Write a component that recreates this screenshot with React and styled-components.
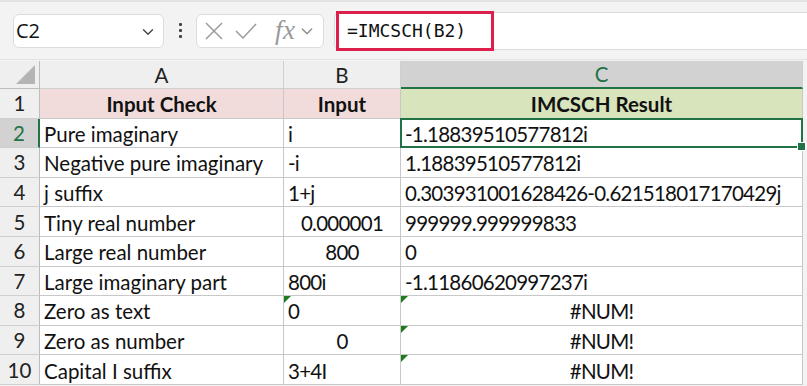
import React from 'react';
import styled, { createGlobalStyle, css } from 'styled-components';

const GlobalStyle = createGlobalStyle`
  html, body {
    margin: 0;
    padding: 0;
    background: #f3f3f3;
  }
  body {
    font-family: Lato, "Liberation Sans", sans-serif;
  }
`

const rows = [
  { a: 'Pure imaginary', b: 'i', c: '-1.18839510577812i' },
  { a: 'Negative pure imaginary', b: '-i', c: '1.18839510577812i' },
  { a: 'j suffix', b: '1+j', c: '0.303931001628426-0.621518017170429j' },
  { a: 'Tiny real number', b: '0.000001', bAlign: 'center', c: '999999.999999833' },
  { a: 'Large real number', b: '800', bAlign: 'center', c: '0' },
  { a: 'Large imaginary part', b: '800i', c: '-1.11860620997237i' },
  { a: 'Zero as text', b: '0', bFlag: true, c: '#NUM!', cAlign: 'center', cFlag: true },
  { a: 'Zero as number', b: '0', bAlign: 'center', c: '#NUM!', cAlign: 'center', cFlag: true },
  { a: 'Capital I suffix', b: '3+4I', c: '#NUM!', cAlign: 'center', cFlag: true },
]

function App() {
  return (
    <Page>
      <GlobalStyle />
      <Toolbar>
        <NameBox>
          <span>C2</span>
          <Chevron width="18" height="18" viewBox="0 0 24 24">
            <path d="M6 9l6 6 6-6" fill="none" stroke="#444" strokeWidth="1.8" strokeLinecap="round" strokeLinejoin="round" />
          </Chevron>
        </NameBox>
        <Dots>
          <i /><i /><i />
        </Dots>
        <FxBox>
          <svg width="22" height="22" viewBox="0 0 22 22">
            <path d="M3 3l16 16M19 3L3 19" stroke="#9a9a9a" strokeWidth="1.5" fill="none" />
          </svg>
          <svg width="24" height="22" viewBox="0 0 24 22">
            <path d="M2 11l7 7L22 4" stroke="#9a9a9a" strokeWidth="1.5" fill="none" />
          </svg>
          <FxLabel>fx</FxLabel>
          <svg width="16" height="16" viewBox="0 0 24 24">
            <path d="M5 9l7 7 7-7" fill="none" stroke="#8a8a8a" strokeWidth="2" strokeLinecap="round" strokeLinejoin="round" />
          </svg>
        </FxBox>
        <FormulaBar>
          <Formula>=IMCSCH(B2)</Formula>
        </FormulaBar>
      </Toolbar>

      <Sheet>
        <Corner><CornerMark /></Corner>
        <ColHead>A</ColHead>
        <ColHead>B</ColHead>
        <ColHead $active>C</ColHead>
        <Filler />

        <RowHead>1</RowHead>
        <Cell $bg="#f2dcdb" $bold $align="center">Input Check</Cell>
        <Cell $bg="#f2dcdb" $bold $align="center">Input</Cell>
        <Cell $bg="#d8e4bc" $bold $align="center">IMCSCH Result</Cell>
        <Filler />

        {rows.map((r, i) => (
          <React.Fragment key={i}>
            <RowHead $active={i === 0}>{i + 2}</RowHead>
            <Cell>{r.a}</Cell>
            <Cell $align={r.bAlign} $flag={r.bFlag} $num>{r.b}</Cell>
            <Cell $align={r.cAlign} $flag={r.cFlag} $selected={i === 0} $num>{r.c}</Cell>
            <Filler />
          </React.Fragment>
        ))}
      </Sheet>
    </Page>
  );
}

export default App;

const Page = styled.div`
  width: 807px;
  height: 386px;
  overflow: hidden;
  background: #f3f3f3;
  border-top: 2px solid #e2e2e2;
  box-sizing: border-box;
`

const Toolbar = styled.div`
  display: flex;
  align-items: center;
  height: 58px;
  padding: 0 0 0 13px;
  border-bottom: 1px solid #e3e3e3;
  box-sizing: border-box;
`

const NameBox = styled.div`
  width: 151px;
  height: 34px;
  box-sizing: border-box;
  background: #fff;
  border: 1px solid #dcdcdc;
  border-radius: 6px;
  display: flex;
  align-items: center;
  justify-content: space-between;
  padding: 0 6px 0 2px;
  font-family: "Open Sans", "Noto Sans", sans-serif;
  font-size: 20px;
  color: #111;
`

const Chevron = styled.svg`
  margin-top: 2px;
`

const Dots = styled.div`
  width: 32px;
  display: flex;
  flex-direction: column;
  align-items: center;
  gap: 3px;

  i {
    width: 3px;
    height: 3px;
    background: #444;
    border-radius: 1px;
  }
`

const FxBox = styled.div`
  width: 128px;
  height: 34px;
  box-sizing: border-box;
  background: #fff;
  border: 1px solid #dcdcdc;
  border-radius: 6px;
  display: flex;
  align-items: center;
  gap: 9px;
  padding: 0 4px 0 6px;
`

const FxLabel = styled.span`
  font-family: "Liberation Serif", "DejaVu Serif", serif;
  font-style: italic;
  font-size: 27px;
  color: #9a9a9a;
  margin-left: 8px;
  margin-right: -6px;
  line-height: 1;
  letter-spacing: 0.5px;
`

const FormulaBar = styled.div`
  flex: 1;
  height: 36px;
  margin-left: 10px;
  background: #fff;
  border: 1px solid #dcdcdc;
  border-right: none;
  border-radius: 6px 0 0 6px;
  display: flex;
  align-items: center;
  position: relative;
`

const Formula = styled.div`
  height: 40px;
  width: 158px;
  margin-left: 1px;
  box-sizing: border-box;
  border: 3px solid #dc1f4b;
  display: flex;
  align-items: center;
  padding-left: 8px;
  font-family: "DejaVu Sans Mono", "Liberation Mono", monospace;
  font-size: 18px;
  letter-spacing: 0;
  color: #111;
`

const Sheet = styled.div`
  display: grid;
  grid-template-columns: 40px 244px 117px 402px 4px;
  grid-template-rows: 28px repeat(10, 29.6px);
  background: #fff;
  margin-top: 1px;
`

const headBase = css`
  background: #efefef;
  border-right: 1px solid #cfcfcf;
  border-bottom: 1px solid #cfcfcf;
  box-sizing: border-box;
  display: flex;
  align-items: center;
  justify-content: center;
  font-family: Lato, "Liberation Sans", sans-serif;
  font-size: 20.5px;
  color: #222;
`

const Corner = styled.div`
  ${headBase};
  border-right: 1px solid #bdbdbd;
  border-bottom: 1px solid #bdbdbd;
  position: relative;
`

const CornerMark = styled.div`
  position: absolute;
  right: 4px;
  bottom: 4px;
  width: 0;
  height: 0;
  border-left: 19px solid transparent;
  border-bottom: 19px solid #b4b4b4;
`

const ColHead = styled.div`
  ${headBase};
  ${p => p.$active && css`
    background: #d2d2d2;
    color: #217346;
    border-bottom: 2px solid #217346;
  `}
`

const RowHead = styled.div`
  ${headBase};
  border-right: 1px solid #bdbdbd;
  ${p => p.$active && css`
    background: #d2d2d2;
    color: #217346;
    border-right: 2px solid #217346;
  `}
`

const Filler = styled.div`
  background: #f3f3f3;
`

const Cell = styled.div`
  position: relative;
  box-sizing: border-box;
  border-right: 1px solid #c8c8c8;
  border-bottom: 1px solid #c8c8c8;
  background: ${p => p.$bg || '#fff'};
  display: flex;
  align-items: center;
  justify-content: ${p => p.$align === 'center' ? 'center' : 'flex-start'};
  padding: 2px 4px 0;
  font-family: Lato, "Liberation Sans", sans-serif;
  font-size: 20.5px;
  letter-spacing: ${p => p.$num ? '-0.75px' : '0'};
  font-weight: ${p => p.$bold ? 700 : 400};
  color: #111;
  white-space: nowrap;

  ${p => p.$flag && css`
    &::before {
      content: "";
      position: absolute;
      left: 0;
      top: 0;
      border-top: 7px solid #1e7b1e;
      border-right: 7px solid transparent;
    }
  `}

  ${p => p.$selected && css`
    &::after {
      content: "";
      position: absolute;
      left: -1px;
      top: -1px;
      right: -1px;
      bottom: -1px;
      border: 2px solid #217346;
      pointer-events: none;
    }
    &::before {
      content: "";
      position: absolute;
      right: -4px;
      bottom: -4px;
      width: 7px;
      height: 7px;
      background: #217346;
      border: 1px solid #fff;
      z-index: 2;
    }
  `}
`
